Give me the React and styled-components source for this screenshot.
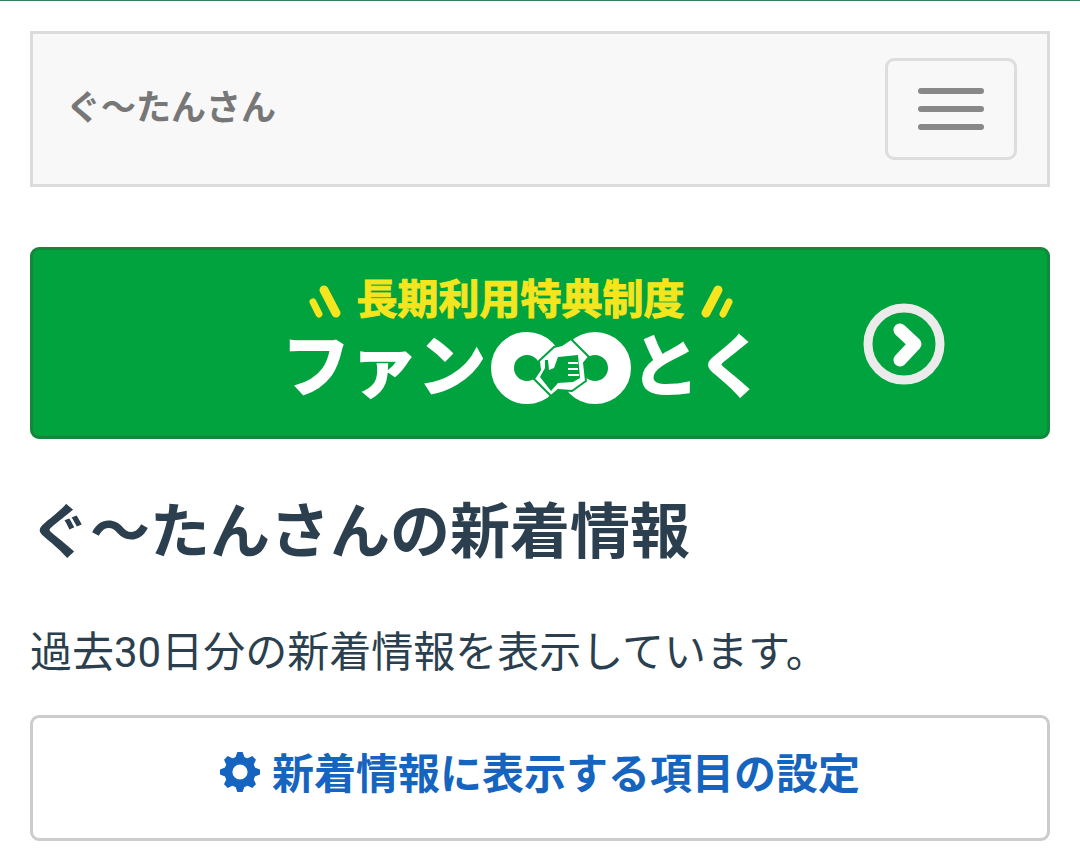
import styled, { createGlobalStyle } from 'styled-components';

const GlobalStyle = createGlobalStyle`
  *,
  *::before,
  *::after {
    box-sizing: border-box;
  }
  body {
    margin: 0;
    background: #fff;
    color: #2b3f4e;
    font-family: Roboto, 'Noto Sans CJK JP', sans-serif;
    font-size: 42px;
    line-height: 60px;
  }
`;

const Page = styled.div`
  padding: 30px;
  border-top: 1px solid #3a7d57;
`;

const Navbar = styled.nav`
  display: flex;
  align-items: center;
  justify-content: space-between;
  height: 156px;
  padding: 0 30px 0 33px;
  border: 3px solid #dcdcdc;
  background: #f8f8f8;
`;

const Brand = styled.a`
  color: #777;
  font-size: 35px;
  font-weight: 700;
  text-decoration: none;
`;

const Toggle = styled.button`
  display: flex;
  flex-direction: column;
  gap: 12px;
  padding: 27px 30px;
  border: 3px solid #ddd;
  border-radius: 9px;
  background: transparent;
  cursor: pointer;
`;

const Bar = styled.span`
  width: 66px;
  height: 6px;
  border-radius: 3px;
  background: #888;
`;

const Banner = styled.a`
  display: flex;
  align-items: center;
  justify-content: flex-end;
  gap: 98px;
  height: 192px;
  margin-top: 60px;
  padding: 2px 102px 0 0;
  border: 3px solid #14873a;
  border-radius: 9px;
  background: #00a33e;
  text-decoration: none;
`;

const Logo = styled.span`
  display: flex;
  flex-direction: column;
  align-items: center;
`;

const Tagline = styled.span`
  display: flex;
  align-items: center;
  gap: 16px;
  padding-right: 6px;
  color: #f5e51e;
  font-size: 41px;
  font-weight: 700;
  line-height: 48px;
  -webkit-text-stroke: 1px #f5e51e;
`;

const LogoName = styled.span`
  display: flex;
  align-items: center;
  color: #fff;
  font-size: 68px;
  font-weight: 700;
  line-height: 88px;
  -webkit-text-stroke: 2px #fff;

  svg {
    margin-left: 5px;
  }
`;

const Title = styled.h1`
  margin: 61px 0 0;
  font-size: 60px;
  font-weight: 700;
  line-height: 66px;
`;

const Lead = styled.p`
  margin: 57px 0 0;
`;

const SettingsButton = styled.button`
  display: flex;
  align-items: center;
  justify-content: center;
  gap: 12px;
  width: 100%;
  height: 126px;
  margin-top: 32px;
  padding: 0 0 6px;
  border: 3px solid #ccc;
  border-radius: 9px;
  background: #fff;
  color: #1565c0;
  font: inherit;
  font-weight: 700;
  cursor: pointer;

  svg {
    margin-bottom: 6px;
  }
`;

const Sparks = ({ flip }) => (
  <svg width="32" height="36" viewBox="0 0 32 36" aria-hidden="true">
    <g
      transform={flip ? 'translate(32 0) scale(-1 1)' : undefined}
      stroke="#f5e51e"
      strokeLinecap="round"
    >
      <path d="M4 20 10 32" strokeWidth="7" />
      <path d="M15 8 27 31" strokeWidth="9" />
    </g>
  </svg>
);

const Rings = () => (
  <svg width="140" height="76" viewBox="0 0 140 76" aria-hidden="true">
    <g fill="none" stroke="#fff" strokeWidth="23">
      <circle cx="36" cy="38" r="24.5" />
      <circle cx="104" cy="38" r="24.5" />
    </g>
    <path
      d="M63 17 71 15 80 9 98 27 93 33 95 51 81 61 67 60 60 66 43 49 49 40 48 31Z"
      fill="#fff"
      stroke="#00a33e"
      strokeWidth="2"
      strokeLinejoin="round"
    />
    <path
      d="M67 27 87 25 89 48 82 52 67 53 60 61 49 47 54 38 54 30 57 30 58 40 63 38Z"
      fill="#00a33e"
    />
    <path d="M77 33h10M77 39h10M77 45h11" stroke="#fff" strokeWidth="2" />
  </svg>
);

const ArrowCircle = () => (
  <svg width="82" height="82" viewBox="0 0 82 82" fill="none" aria-hidden="true">
    <circle cx="41" cy="41" r="36" stroke="#ebebeb" strokeWidth="9" />
    <path
      d="M37 27 52 41 37 57"
      stroke="#fff"
      strokeWidth="13"
      strokeLinecap="round"
      strokeLinejoin="round"
    />
  </svg>
);

const teeth = [0, 45, 90, 135, 180, 225, 270, 315];

const Cog = () => (
  <svg width="40" height="40" viewBox="0 0 40 40" aria-hidden="true">
    <circle cx="20" cy="20" r="11.6" fill="none" stroke="currentColor" strokeWidth="8" />
    {teeth.map(angle => (
      <path
        key={angle}
        d="M17.4 0h5.2l2.6 7h-10.4z"
        fill="currentColor"
        transform={`rotate(${angle} 20 20)`}
      />
    ))}
  </svg>
);

const App = () => (
  <>
    <GlobalStyle />
    <Page lang="ja">
      <Navbar>
        <Brand href="#">ぐ〜たんさん</Brand>
        <Toggle type="button" aria-label="メニュー">
          <Bar />
          <Bar />
          <Bar />
        </Toggle>
      </Navbar>
      <Banner href="#">
        <Logo>
          <Tagline>
            <Sparks />
            長期利用特典制度
            <Sparks flip />
          </Tagline>
          <LogoName>
            ファン
            <Rings />
            とく
          </LogoName>
        </Logo>
        <ArrowCircle />
      </Banner>
      <Title>ぐ〜たんさんの新着情報</Title>
      <Lead>過去30日分の新着情報を表示しています。</Lead>
      <SettingsButton type="button">
        <Cog />
        新着情報に表示する項目の設定
      </SettingsButton>
    </Page>
  </>
);

export default App;
